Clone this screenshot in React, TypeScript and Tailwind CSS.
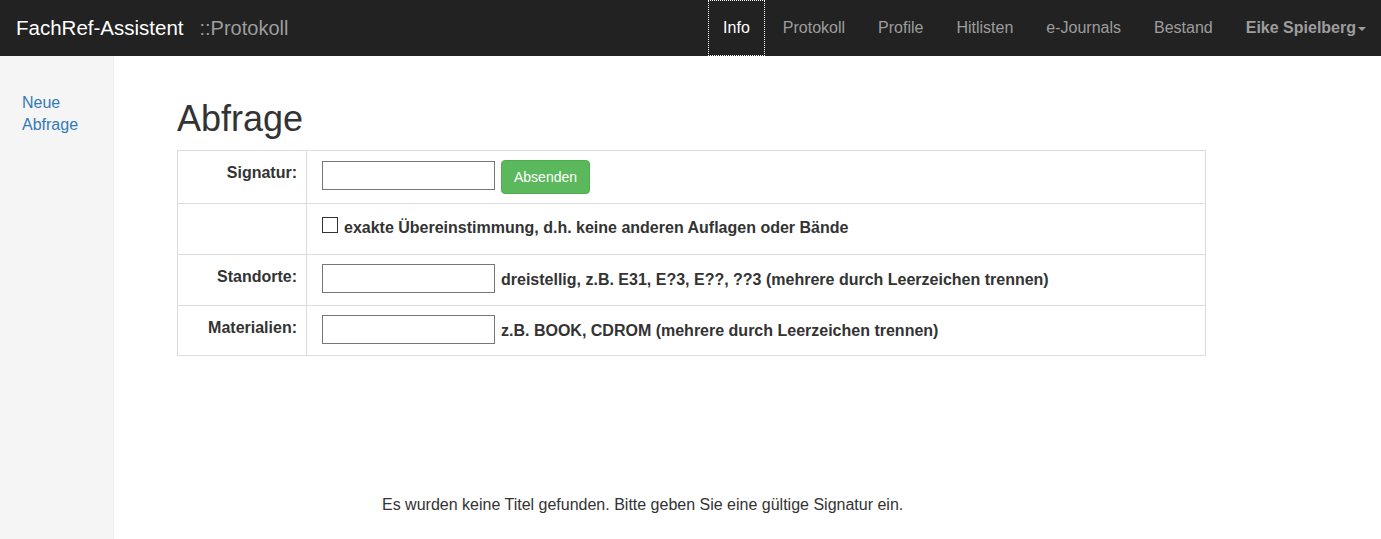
import React from 'react';

const navItems = ['Protokoll', 'Profile', 'Hitlisten', 'e-Journals', 'Bestand'];

function TextInput() {
  return <input type="text" className="w-[173px] h-[29px] border border-[#767676] bg-white shrink-0 outline-none" />;
}

export default function App() {
  return (
    <div className="min-h-screen flex flex-col bg-white text-[#333] font-['Liberation_Sans',Arial,sans-serif] text-[16px] leading-[22px]">
      {/* Navbar */}
      <div className="h-[56px] bg-[#222] flex items-center shrink-0">
        <span className="pl-[16px] text-[20.5px] leading-[20px] text-white">FachRef-Assistent</span>
        <span className="ml-[16px] text-[20px] leading-[20px] text-[#9d9d9d]">::Protokoll</span>
        <div className="ml-auto flex items-stretch h-full gap-[3px]">
          <a className="flex items-center px-[14px] border border-dotted border-white text-white leading-[20px]">Info</a>
          {navItems.map((item) => (
            <a key={item} className="flex items-center px-[15px] text-[#9d9d9d] leading-[20px]">
              {item}
            </a>
          ))}
          <a className="flex items-center px-[15px] text-[#9d9d9d] font-bold leading-[20px]">
            Eike Spielberg
            <span className="ml-[2px] mt-[2px] w-0 h-0 border-x-[4px] border-x-transparent border-t-[4px] border-t-[#9d9d9d]" />
          </a>
        </div>
      </div>

      <div className="flex flex-1">
        {/* Sidebar */}
        <div className="w-[114px] shrink-0 bg-[#f5f5f5] border-r border-[#eee] pl-[22px] pr-[15px] pt-[36px]">
          <a className="text-[#337ab7]">Neue Abfrage</a>
        </div>

        {/* Main */}
        <div className="flex-1 pl-[63px] pt-[43px]">
          <h1 className="text-[36px] leading-[40px] font-normal">Abfrage</h1>

          <div className="mt-[11px] w-[1029px] border border-[#ddd] font-bold">
            <div className="flex border-b border-[#ddd] h-[53px]">
              <div className="w-[129px] border-r border-[#ddd] text-right pr-[9px] pt-[11px]">Signatur:</div>
              <div className="flex items-start gap-[6px] pl-[15px] pt-[9px]">
                <div className="mt-[1px]"><TextInput /></div>
                <button className="h-[34px] px-[12px] rounded-[4px] bg-[#5cb85c] border border-[#4cae4c] text-white text-[14px] leading-[20px] font-normal">
                  Absenden
                </button>
              </div>
            </div>

            <div className="flex border-b border-[#ddd] h-[51px]">
              <div className="w-[129px] border-r border-[#ddd]" />
              <div className="flex items-start gap-[6px] pl-[15px] pt-[13px]">
                <span className="w-[16px] h-[16px] border border-[#333] bg-white shrink-0" />
                <span>exakte Übereinstimmung, d.h. keine anderen Auflagen oder Bände</span>
              </div>
            </div>

            <div className="flex border-b border-[#ddd] h-[51px]">
              <div className="w-[129px] border-r border-[#ddd] text-right pr-[9px] pt-[11px]">Standorte:</div>
              <div className="flex items-start gap-[6px] pl-[15px] pt-[9px]">
                <TextInput />
                <span className="pt-[5px]">dreistellig, z.B. E31, E?3, E??, ??3 (mehrere durch Leerzeichen trennen)</span>
              </div>
            </div>

            <div className="flex h-[49px]">
              <div className="w-[129px] border-r border-[#ddd] text-right pr-[9px] pt-[11px]">Materialien:</div>
              <div className="flex items-start gap-[6px] pl-[15px] pt-[9px]">
                <TextInput />
                <span className="pt-[5px]">z.B. BOOK, CDROM (mehrere durch Leerzeichen trennen)</span>
              </div>
            </div>
          </div>

          <p className="mt-[138px] pl-[205px]">Es wurden keine Titel gefunden. Bitte geben Sie eine gültige Signatur ein.</p>
        </div>
      </div>
    </div>
  );
}
